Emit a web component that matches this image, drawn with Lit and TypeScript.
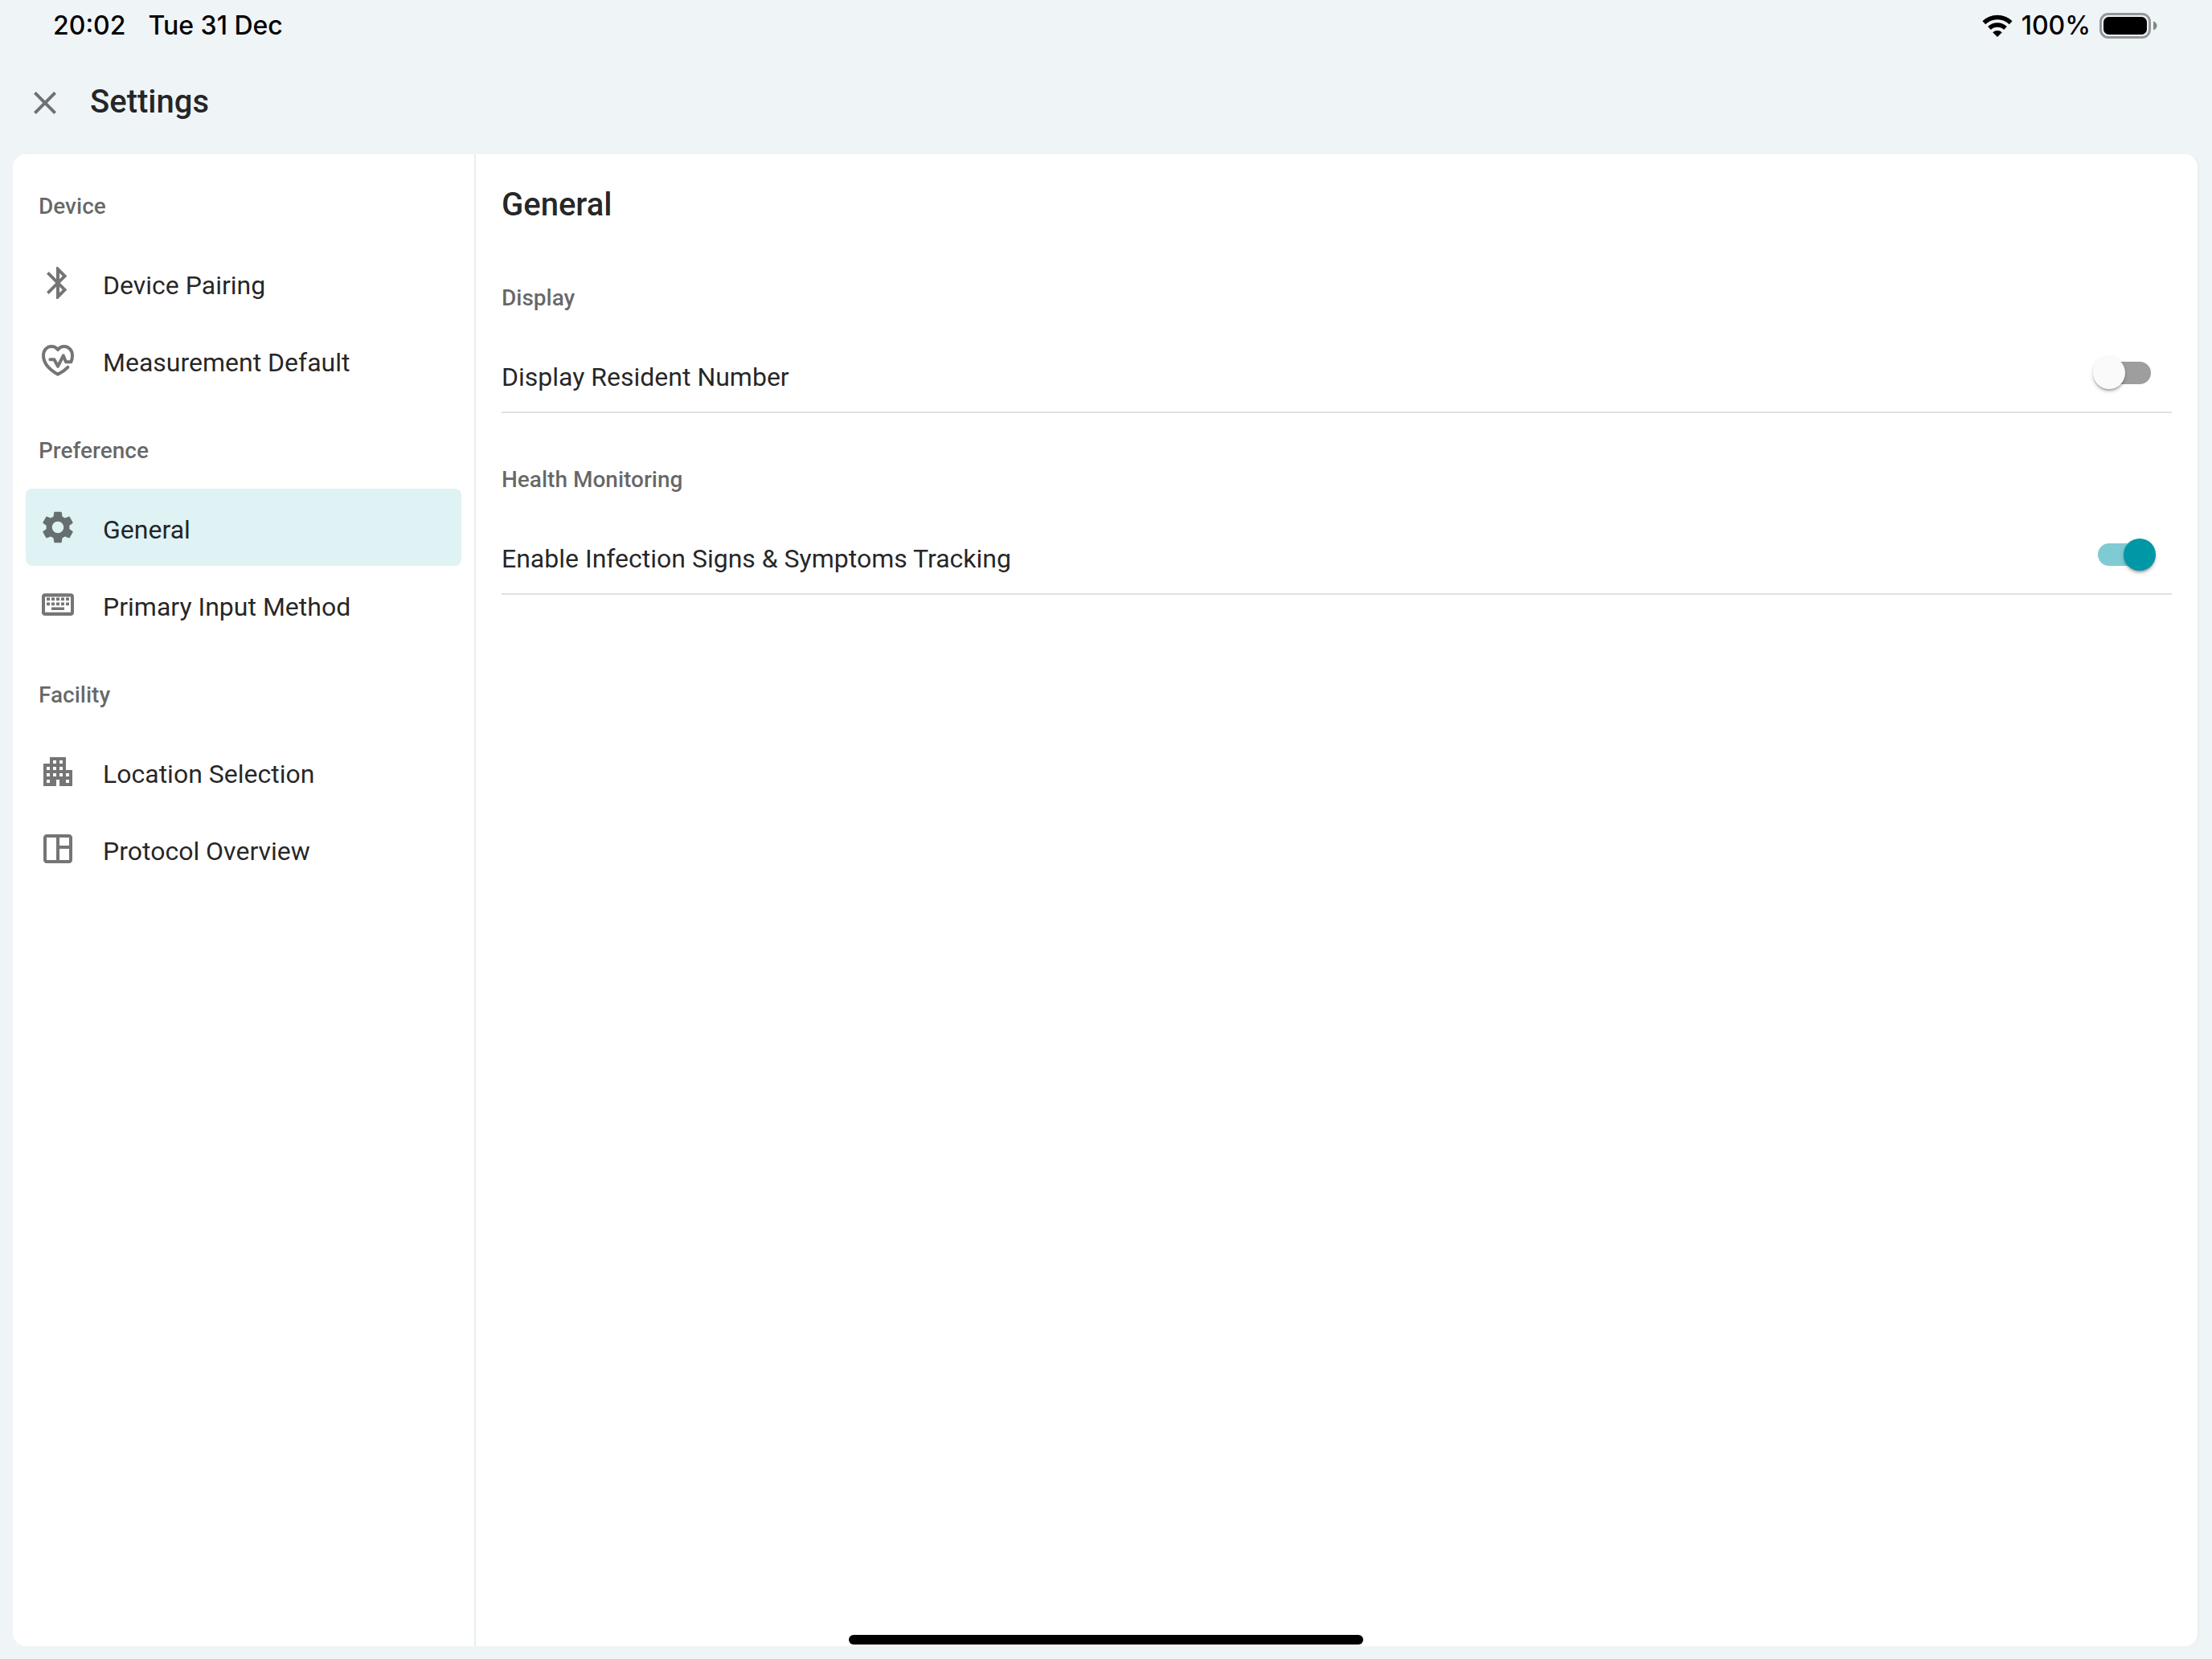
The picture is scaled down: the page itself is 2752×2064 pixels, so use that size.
import { LitElement, html, css, svg } from "lit";
import { customElement, state } from "lit/decorators.js";
import { classMap } from "lit/directives/class-map.js";

const icons = {
  close: svg`<path d="M19 6.41 17.59 5 12 10.59 6.41 5 5 6.41 10.59 12 5 17.59 6.41 19 12 13.41 17.59 19 19 17.59 13.41 12z"/>`,
  bluetooth: svg`<path d="M17.71 7.71 12 2h-1v7.59L6.41 5 5 6.41 10.59 12 5 17.59 6.41 19 11 14.41V22h1l5.71-5.71-4.3-4.29 4.3-4.29zM13 5.83l1.88 1.88L13 9.59V5.83zm1.88 10.46L13 18.17v-3.76l1.88 1.88z"/>`,
  heart: svg`<g fill="none" stroke="currentColor" stroke-width="2" stroke-linecap="round" stroke-linejoin="round"><path d="M7.2 11.6h2.5l2.3 4.300 3.400-6.700 1.600 3.900h3.200c.5-1.200.8-2.500.8-3.800C21 5.800 18.700 3.500 16 3.500c-1.600 0-3.100.8-4 2.100-.9-1.300-2.400-2.100-4-2.100C5.200 3.500 3 5.800 3 9.200c0 5.300 4.200 8.900 9 11.700 2.300-1.200 4.500-2.700 6.200-4.500"/></g>`,
  gear: svg`<path d="M19.14 12.94c.04-.3.06-.61.06-.94 0-.32-.02-.64-.07-.94l2.03-1.58c.18-.14.23-.41.12-.61l-1.92-3.32c-.12-.22-.37-.29-.59-.22l-2.39.96c-.5-.38-1.03-.7-1.62-.94l-.36-2.54c-.04-.24-.24-.41-.48-.41h-3.84c-.24 0-.43.17-.47.41l-.36 2.54c-.59.24-1.13.57-1.62.94l-2.39-.96c-.22-.08-.47 0-.59.22L2.74 8.87c-.12.21-.08.47.12.61l2.03 1.58c-.05.3-.09.63-.09.94s.02.64.07.94l-2.03 1.58c-.18.14-.23.41-.12.61l1.92 3.32c.12.22.37.29.59.22l2.39-.96c.5.38 1.03.7 1.62.94l.36 2.54c.05.24.24.41.48.41h3.84c.24 0 .44-.17.47-.41l.36-2.54c.59-.24 1.13-.56 1.62-.94l2.39.96c.22.08.47 0 .59-.22l1.92-3.32c.12-.22.07-.47-.12-.61l-2.01-1.58zM12 15.6c-1.98 0-3.6-1.62-3.6-3.6s1.62-3.6 3.6-3.6 3.6 1.62 3.6 3.6-1.62 3.6-3.6 3.6z"/>`,
  keyboard: svg`<path fill-rule="evenodd" d="M4 4h16c1.1 0 2 .9 2 2v12c0 1.1-.9 2-2 2H4c-1.100 0-2-.9-2-2V6c0-1.100.9-2 2-2zm0 2.500v11h16v-11zM11 7h2v2.200h-2zM11 10.500h2v2.200h-2zM8 7h2v2.200H8zM8 10.500h2v2.200H8zM5 10.500h2v2.200H5zM5 7h2v2.200H5zM8 14h8v2H8zM14 10.500h2v2.200h-2zM14 7h2v2.200h-2zM17 10.500h2v2.200h-2zM17 7h2v2.200h-2z" transform="translate(0 1.600) scale(1 .87)"/>`,
  building: svg`<path d="M17 11V3H7v4H3v14h8v-4h2v4h8V11h-4zM7 19H5v-2h2v2zm0-4H5v-2h2v2zm0-4H5V9h2v2zm4 4H9v-2h2v2zm0-4H9V9h2v2zm0-4H9V5h2v2zm4 8h-2v-2h2v2zm0-4h-2V9h2v2zm0-4h-2V5h2v2zm4 12h-2v-2h2v2zm0-4h-2v-2h2v2z"/>`,
  layout: svg`<path d="M19 3H5c-1.1 0-2 .9-2 2v14c0 1.1.9 2 2 2h14c1.1 0 2-.9 2-2V5c0-1.1-.9-2-2-2zM5 19V5h6v14H5zm14 0h-6v-7h6v7zm0-9h-6V5h6v5z"/>`,
};
type IconName = keyof typeof icons;

interface NavSection {
  title: string;
  items: { label: string; icon: IconName }[];
}

const sections: NavSection[] = [
  {
    title: "Device",
    items: [
      { label: "Device Pairing", icon: "bluetooth" },
      { label: "Measurement Default", icon: "heart" },
    ],
  },
  {
    title: "Preference",
    items: [
      { label: "General", icon: "gear" },
      { label: "Primary Input Method", icon: "keyboard" },
    ],
  },
  {
    title: "Facility",
    items: [
      { label: "Location Selection", icon: "building" },
      { label: "Protocol Overview", icon: "layout" },
    ],
  },
];

@customElement("app-root")
export class AppRoot extends LitElement {
  @state() private current = "General";

  static styles = css`
    :host {
      display: flex;
      flex-direction: column;
      position: relative;
      box-sizing: border-box;
      min-height: 100vh;
      padding: 0 16px 16px;
      background: #eff4f7;
      color: rgba(0, 0, 0, 0.87);
      font: 400 32px/48px Roboto, sans-serif;
    }
    * {
      box-sizing: border-box;
    }
    .status {
      display: flex;
      align-items: center;
      justify-content: space-between;
      height: 64px;
      padding: 0 52px 0 50px;
      color: #000;
      font: 500 32px/40px Inter, sans-serif;
    }
    .clock,
    .power {
      display: flex;
      align-items: center;
    }
    .clock {
      gap: 28px;
    }
    .power {
      gap: 11px;
    }
    .wifi {
      width: 38px;
      height: 28px;
    }
    .battery {
      width: 72px;
      height: 32px;
    }
    .topbar {
      display: flex;
      align-items: center;
      gap: 32px;
      height: 128px;
      padding: 0 16px;
    }
    .close {
      display: flex;
      padding: 0;
      border: 0;
      background: none;
      color: rgba(0, 0, 0, 0.54);
      cursor: pointer;
    }
    .icon {
      flex: none;
      width: 48px;
      height: 48px;
      fill: currentColor;
    }
    h1,
    h2,
    h3 {
      margin: 0;
      font-weight: 500;
    }
    h1,
    h2 {
      font-size: 40px;
      line-height: 48px;
    }
    h1 {
      padding-bottom: 2px;
    }
    h3 {
      color: rgba(0, 0, 0, 0.6);
      font-size: 28px;
      line-height: 40px;
    }
    .card {
      display: flex;
      flex: 1;
      overflow: hidden;
      border-right: 2px solid #e8eef0;
      border-radius: 16px;
      background: #fff;
    }
    .sidebar {
      flex: none;
      width: 576px;
      padding: 0 16px;
      border-right: 2px solid #e6eeee;
    }
    .group-title {
      padding: 45px 16px 27px;
    }
    .item {
      display: flex;
      align-items: center;
      gap: 32px;
      height: 96px;
      padding: 0 16px;
      border-radius: 8px;
      color: inherit;
      text-decoration: none;
    }
    .item .icon {
      color: rgba(0, 0, 0, 0.54);
    }
    .item span {
      padding-top: 5px;
    }
    .item.active {
      background: #dff2f4;
    }
    .content {
      flex: 1;
      padding: 39px 32px;
    }
    .settings {
      padding-top: 34px;
    }
    .setting-title {
      padding: 38px 0 25px;
    }
  `;

  private icon(name: IconName) {
    return html`<svg class="icon" viewBox="0 0 24 24" aria-hidden="true">${icons[name]}</svg>`;
  }

  private select(e: Event, label: string) {
    e.preventDefault();
    this.current = label;
  }

  render() {
    return html`
      <div class="status">
        <div class="clock"><span>20:02</span><span>Tue 31 Dec</span></div>
        <div class="power">
          <svg class="wifi" viewBox="0 0 38 28" aria-hidden="true">
            <g fill="none" stroke="#000" stroke-width="5.4">
              <path d="M2.300 10.200a24 24 0 0 1 33.400 0" />
              <path d="M9 17a14.500 14.500 0 0 1 20 0" />
            </g>
            <path d="M19 28 13.200 22.300a8.500 8.500 0 0 1 11.600 0z" />
          </svg>
          <span>100%</span>
          <svg class="battery" viewBox="0 0 72 32" aria-hidden="true">
            <rect x="1.5" y="1.5" width="61" height="29" rx="9.5" fill="none" stroke="#000" stroke-opacity=".38" stroke-width="3" />
            <rect x="5" y="5" width="54" height="22" rx="6.5" />
            <path d="M67 10.500c6 2 6 9 0 11z" fill-opacity=".45" />
          </svg>
        </div>
      </div>
      <header class="topbar">
        <button class="close" type="button" aria-label="Close">${this.icon("close")}</button>
        <h1>Settings</h1>
      </header>
      <div class="card">
        <nav class="sidebar">
          ${sections.map(
            (s) => html`
              <h3 class="group-title">${s.title}</h3>
              ${s.items.map(
                (i) => html`<a
                  href="#"
                  class=${classMap({ item: true, active: i.label === this.current })}
                  @click=${(e: Event) => this.select(e, i.label)}
                  >${this.icon(i.icon)}<span>${i.label}</span></a
                >`
              )}
            `
          )}
        </nav>
        <main class="content">
          <h2>General</h2>
          <div class="settings">
            <h3 class="setting-title">Display</h3>
            <settings-row label="Display Resident Number"></settings-row>
            <h3 class="setting-title">Health Monitoring</h3>
            <settings-row label="Enable Infection Signs &amp; Symptoms Tracking" on></settings-row>
          </div>
        </main>
      </div>
      <home-indicator></home-indicator>
    `;
  }
}

@customElement("settings-row")
export class SettingsRow extends LitElement {
  static properties = { label: { type: String }, on: { type: Boolean } };
  declare label: string;
  declare on: boolean;

  static styles = css`
    :host {
      display: flex;
      align-items: center;
      justify-content: space-between;
      box-sizing: border-box;
      height: 98px;
      margin-bottom: 25px;
      padding-right: 20px;
      border-bottom: 2px solid #e0e0e0;
    }
    label {
      padding-top: 10px;
    }
    .switch {
      appearance: none;
      display: flex;
      align-items: center;
      width: 78px;
      height: 40px;
      margin: 0;
      cursor: pointer;
    }
    .switch::before {
      content: "";
      flex: 1;
      height: 28px;
      margin: 0 -34px 0 6px;
      border-radius: 14px;
      background: #9e9e9e;
    }
    .switch::after {
      content: "";
      width: 40px;
      height: 40px;
      margin-right: 38px;
      margin-left: -38px;
      border-radius: 50%;
      background: #fafafa;
      box-shadow: 0 4px 4px -2px rgba(0, 0, 0, 0.2), 0 2px 2px rgba(0, 0, 0, 0.14), 0 2px 6px rgba(0, 0, 0, 0.12);
    }
    .switch:checked::before {
      background: #80cbd3;
    }
    .switch:checked::after {
      margin-right: 0;
      margin-left: 0;
      background: #0097a7;
    }
  `;

  render() {
    return html`
      <label for="toggle">${this.label}</label>
      <input
        id="toggle"
        class="switch"
        type="checkbox"
        role="switch"
        .checked=${this.on}
        @change=${(e: Event) => (this.on = (e.target as HTMLInputElement).checked)}
      />
    `;
  }
}

@customElement("home-indicator")
export class HomeIndicator extends LitElement {
  static styles = css`
    :host {
      position: absolute;
      bottom: 18px;
      left: 50%;
      width: 640px;
      height: 12px;
      margin-left: -320px;
      border-radius: 6px;
      background: #000;
    }
  `;
  render() {
    return html``;
  }
}
